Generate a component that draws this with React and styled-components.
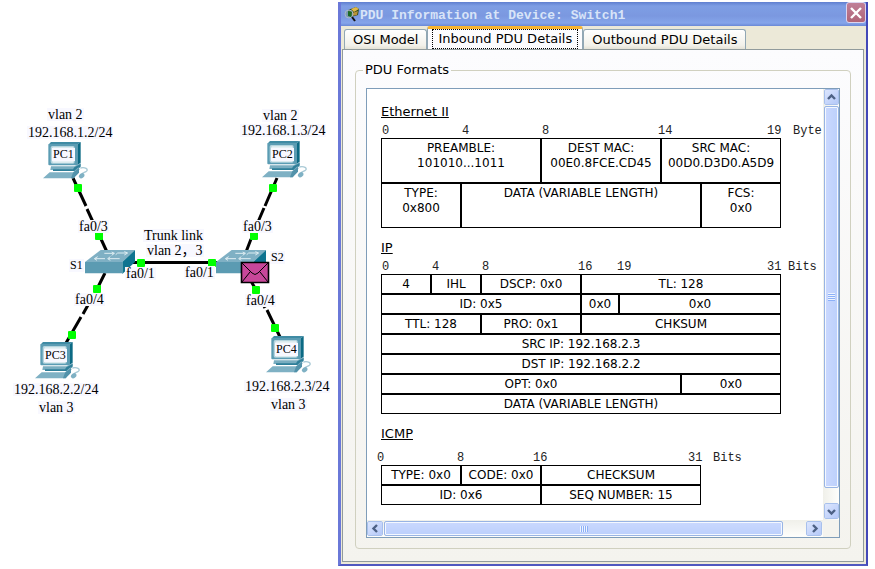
import React from 'react';
import styled, { createGlobalStyle } from 'styled-components';

const sans = '"DejaVu Sans", Verdana, sans-serif';
const mono = '"Liberation Mono", "Courier New", monospace';
const serif = '"Liberation Serif", "Noto Sans CJK SC", serif';

const GlobalStyle = createGlobalStyle`
  * {
    box-sizing: border-box;
  }
  body {
    margin: 0;
    background: #fff;
    color: #000;
    font-family: ${sans};
  }
`;

const Page = styled.div`
  display: flex;
  align-items: flex-start;
  padding: 2px 7px 2px 0;
`;

/* topology */

const Topology = styled.section`
  position: relative;
  flex: 0 0 338px;
  margin-top: -2px;
`;

const Links = styled.svg`
  display: block;
  width: 100%;
`;

const Label = styled.span`
  position: absolute;
  left: ${p => p.$x}px;
  top: ${p => p.$y}px;
  padding: 0 1px;
  background: #f8f8ff;
  font-family: ${serif};
  font-size: ${p => (p.$small ? 12 : 14)}px;
  line-height: 13px;
  white-space: nowrap;
`;

/* dialog */

const Dialog = styled.section`
  flex: 1;
  min-width: 0;
  background: #ece9d8;
  border: solid #6a78d8;
  border-width: 0 2px 2px 3px;
  border-right-color: #4348b8;
  border-bottom-color: #5058c0;
`;

const TitleBar = styled.header`
  display: flex;
  align-items: center;
  height: 24px;
  padding: 0 0 0 3px;
  background: linear-gradient(#5f7fd0, #7e9ee4 4px, #7b98e0 14px, #85a5ea 21px, #6a88d6);
`;

const Title = styled.h1`
  flex: 1;
  margin: 0;
  padding-top: 4px;
  color: #d8e4f8;
  font-family: ${mono};
  font-size: 13px;
  font-weight: bold;
  line-height: 16px;
  white-space: nowrap;
`;

const CloseButton = styled.button`
  display: grid;
  place-items: center;
  align-self: flex-start;
  width: 20px;
  height: 21px;
  padding: 0;
  background: linear-gradient(#c08098, #b06478);
  border: 1px solid #dcd4ee;
  border-radius: 3px;
`;

const Tabs = styled.nav`
  display: flex;
  align-items: flex-end;
  height: 23px;
  padding-left: 3px;
`;

const Tab = styled.button`
  height: 20px;
  padding: 0 8px;
  background: linear-gradient(#fff, #f2f1ea 80%, #e4e2d6);
  border: 1px solid #91a7b4;
  border-bottom: 0;
  border-radius: 3px 3px 0 0;
  font-family: ${sans};
  font-size: 13px;
  line-height: 18px;
  white-space: nowrap;
  color: #000;

  &[aria-selected='true'] {
    height: 23px;
    padding: 0 4px;
    background: #fcfcfe;
    border-top: 3px solid #f8b430;
  }
`;

const Focus = styled.span`
  display: block;
  padding: 0 5px;
  border: 1px dotted #000;
`;

const Pane = styled.div`
  margin: 0 2px 2px 1px;
  padding: 12px;
  background: linear-gradient(#fcfcfe, #f4f3ee);
  border: 1px solid #919b9c;
`;

const Group = styled.fieldset`
  min-width: 0;
  margin: 0;
  padding: 10px;
  border: 1px solid #d0d0bf;
  border-radius: 4px;
`;

const Legend = styled.legend`
  margin-left: -3px;
  padding: 0 2px;
  font-size: 13px;
  line-height: 16px;
`;

const ScrollArea = styled.div`
  display: grid;
  grid-template-columns: minmax(0, 1fr) 16px;
  grid-template-rows: auto 17px;
  background: #f4f3ee;
  border: 1px solid #7f9db9;
`;

const Viewport = styled.div`
  overflow: hidden;
  padding: 15px 0 15px 10px;
  background: #fff;
`;

const Bar = styled.div`
  display: flex;
  flex-direction: ${p => (p.$vertical ? 'column' : 'row')};
  gap: 1px;
  padding: ${p => (p.$vertical ? '0 0 1px 1px' : '1px 1px 1px 0')};
  background: linear-gradient(${p => (p.$vertical ? '90deg' : '180deg')}, #f0f0ea, #fefefc);
`;

const Arrow = styled.button`
  display: grid;
  place-items: center;
  flex: 0 0 16px;
  padding: 0;
  background: linear-gradient(135deg, #dce6fe, #b4c8f8);
  border: 1px solid #fff;
  outline: 1px solid #a8c0ec;
  outline-offset: -1px;
  border-radius: 2px;
`;

const Thumb = styled.div`
  display: grid;
  place-items: center;
  flex: ${p => p.$size};
  background: linear-gradient(${p => (p.$vertical ? '90deg' : '180deg')}, #cad8fe, #bcd0fc);
  border: 1px solid #98b4e4;
  border-radius: 2px;
  box-shadow: inset 0 0 0 1px #f4f8ff;
`;

const Rest = styled.div`
  flex: ${p => p.$size};
`;

const Grip = styled.span`
  width: ${p => (p.$vertical ? 7 : 8)}px;
  height: ${p => (p.$vertical ? 8 : 6)}px;
  background: repeating-linear-gradient(
    ${p => (p.$vertical ? '180deg' : '90deg')},
    #eef4fe 0 1px,
    #8cb0f8 1px 2px
  );
`;

/* header formats */

const Format = styled.section`
  & + & {
    margin-top: 12px;
  }
`;

const Name = styled.h2`
  margin: 0 0 ${p => p.$gap}px 4px;
  font-size: 13px;
  font-weight: normal;
  line-height: 16px;
  text-decoration: underline;
`;

const Ruler = styled.div`
  display: flex;
  padding-left: ${p => p.$start}px;
  font-family: ${mono};
  font-size: 12px;
  line-height: 14px;
  color: #222;
`;

const Mark = styled.span`
  flex: 0 0 ${p => p.$width}px;
`;

const Fields = styled.table`
  table-layout: fixed;
  width: ${p => p.$width}px;
  margin-left: 4px;
  border-collapse: separate;
  border-spacing: 0;
`;

const Column = styled.col`
  width: ${p => p.$width}px;
`;

const Field = styled.td`
  height: ${p => (p.$tall ? 45 : 20)}px;
  padding: ${p => (p.$tall ? 2 : 0)}px 0 0;
  border: 1px solid #000;
  font-size: 12px;
  line-height: 15px;
  text-align: center;
  vertical-align: ${p => (p.$tall ? 'top' : 'middle')};
  white-space: pre-line;
`;

// each field is [text, number of columns it spans]
const formats = [
  {
    name: 'Ethernet II',
    gap: 4,
    start: 5,
    tall: true,
    marks: [['0', 80], ['4', 80], ['8', 116], ['14', 109], ['19', 26], ['Byte', 30]],
    columns: [80, 80, 120, 40, 80],
    rows: [
      [['PREAMBLE:\n101010...1011', 2], ['DEST MAC:\n00E0.8FCE.CD45', 1], ['SRC MAC:\n00D0.D3D0.A5D9', 2]],
      [['TYPE:\n0x800', 1], ['DATA (VARIABLE LENGTH)', 3], ['FCS:\n0x0', 1]],
    ],
  },
  {
    name: 'IP',
    gap: 4,
    start: 5,
    marks: [['0', 50], ['4', 50], ['8', 96], ['16', 39], ['19', 150], ['31', 21], ['Bits', 30]],
    columns: [50, 50, 100, 38, 62, 100],
    rows: [
      [['4', 1], ['IHL', 1], ['DSCP: 0x0', 1], ['TL: 128', 3]],
      [['ID: 0x5', 3], ['0x0', 1], ['0x0', 2]],
      [['TTL: 128', 2], ['PRO: 0x1', 1], ['CHKSUM', 3]],
      [['SRC IP: 192.168.2.3', 6]],
      [['DST IP: 192.168.2.2', 6]],
      [['OPT: 0x0', 5], ['0x0', 1]],
      [['DATA (VARIABLE LENGTH)', 6]],
    ],
  },
  {
    name: 'ICMP',
    gap: 9,
    start: 0,
    marks: [['0', 80], ['8', 76], ['16', 155], ['31', 25], ['Bits', 30]],
    columns: [80, 80, 160],
    rows: [
      [['TYPE: 0x0', 1], ['CODE: 0x0', 1], ['CHECKSUM', 1]],
      [['ID: 0x6', 2], ['SEQ NUMBER: 15', 1]],
    ],
  },
];

const PduFormat = ({ format }) => (
  <Format>
    <Name $gap={format.gap}>{format.name}</Name>
    <Ruler $start={format.start}>
      {format.marks.map(([text, width]) => (
        <Mark key={text} $width={width}>
          {text}
        </Mark>
      ))}
    </Ruler>
    <Fields aria-label={format.name} $width={format.columns.reduce((a, b) => a + b, 0)}>
      <colgroup>
        {format.columns.map((width, i) => (
          <Column key={i} $width={width} />
        ))}
      </colgroup>
      <tbody>
        {format.rows.map((row, i) => (
          <tr key={i}>
            {row.map(([text, span], j) => (
              <Field key={j} colSpan={span} $tall={format.tall}>
                {text}
              </Field>
            ))}
          </tr>
        ))}
      </tbody>
    </Fields>
  </Format>
);

const chevrons = {
  up: 'M1 6 L4.5 2.5 L8 6',
  down: 'M1 3 L4.5 6.5 L8 3',
  left: 'M6 1 L2.5 4.5 L6 8',
  right: 'M3 1 L6.5 4.5 L3 8',
};

const ScrollBar = ({ vertical, thumb, rest }) => {
  const [back, forward] = vertical ? ['up', 'down'] : ['left', 'right'];
  const arrow = to => (
    <Arrow type="button" aria-label={`Scroll ${to}`}>
      <svg width="9" height="9" viewBox="0 0 9 9">
        <path d={chevrons[to]} fill="none" stroke="#4d6185" strokeWidth="2.4" />
      </svg>
    </Arrow>
  );

  return (
    <Bar $vertical={vertical}>
      {arrow(back)}
      <Thumb $vertical={vertical} $size={thumb}>
        <Grip $vertical={vertical} />
      </Thumb>
      <Rest $size={rest} />
      {arrow(forward)}
    </Bar>
  );
};

const pcs = [[43, 142], [262, 141], [35, 342], [266, 336]];
const switches = [[85, 250], [216, 250]];
const ports = [
  [78, 188], [99, 236], [273, 188], [254, 236], [141, 263],
  [212, 263], [97, 289], [72, 335], [256, 290], [275, 328],
];

const labels = [
  ['vlan 2', 47, 108],
  ['192.168.1.2/24', 27, 126],
  ['vlan 2', 262, 109],
  ['192.168.1.3/24', 240, 124],
  ['fa0/3', 78, 220],
  ['fa0/3', 242, 220],
  ['Trunk link', 143, 229],
  ['vlan 2，3', 146, 244],
  ['S1', 69, 259, true],
  ['S2', 270, 251, true],
  ['fa0/1', 125, 267],
  ['fa0/1', 184, 266],
  ['fa0/4', 74, 293],
  ['fa0/4', 245, 294],
  ['192.168.2.2/24', 13, 383],
  ['vlan 3', 38, 401],
  ['192.168.2.3/24', 244, 380],
  ['vlan 3', 270, 398],
  ['PC1', 52, 148, true],
  ['PC2', 271, 148, true],
  ['PC3', 44, 349, true],
  ['PC4', 275, 343, true],
];

const Pc = ({ x, y }) => (
  <svg x={x} y={y} width="45" height="37" viewBox="0 0 135 111">
    <path d="M16 8 L24 0 H113 L103 8 Z" fill="#3f8ba4" />
    <path d="M103 8 L113 0 V62 L103 70 Z" fill="#0c6a84" />
    <rect x="16" y="6" width="88" height="64" rx="3" fill="#5b9cb3" />
    <rect x="23" y="12" width="72" height="53" rx="5" fill="#b4d4de" />
    <rect x="28" y="16" width="64" height="46" rx="3" fill="#e6f1f4" />
    <path d="M24 73 H94 L113 63 V70 L98 84 H22 Z" fill="#79adc0" />
    <path d="M94 76 L113 66 V74 L98 87 H30 V82 H90 Z" fill="#2f7f99" />
    <path d="M20 91 H90 L106 76 L110 82 L92 109 H0 Z" fill="#7fb1c4" />
    <path d="M90 92 L108 78 V92 L92 109 H84 Z" fill="#5292aa" />
    <path d="M112 78 C126 74 138 82 130 88 L118 94" fill="none" stroke="#a9cad6" strokeWidth="4" />
    <ellipse cx="116" cy="101" rx="9" ry="7" fill="#7fb1c4" transform="rotate(-40 116 101)" />
  </svg>
);

const Switch = ({ x, y }) => (
  <svg x={x} y={y} width="50" height="24" viewBox="0 0 150 72">
    <path d="M0 36 L47 0 H150 L112 36 Z" fill="#7fb0c4" />
    <path d="M112 36 L150 0 V36 L112 72 Z" fill="#0f7490" />
    <path d="M0 36 H112 V70 H0 Z" fill="#5b9bb2" />
    <path
      d="M58 10 H88 L80 6 M88 10 L80 16 M30 26 H60 M38 20 L28 26 L36 31 M92 14 L98 9 H126 M118 5 L128 9 L118 15 M70 26 H104 M76 20 L68 26 L76 31"
      fill="none"
      stroke="#deedf2"
      strokeWidth="3"
    />
  </svg>
);

const NetworkTopology = () => (
  <Topology aria-label="Network topology">
    <Links viewBox="0 0 338 420" role="img" aria-label="Two switches joined by a trunk">
      <g stroke="#000" strokeWidth="3">
        <path d="M73 178 L86 206 M87 209 L93 222 M101 239 L107 252" />
        <path d="M277 178 L265 206 M264 208 L258 222 M251 239 L246 252" />
        <path d="M105 273 L97 289 M88 305 L83 314 M81 317 L66 343" />
        <path d="M251 281 L256 290 M264 306 L265 308 M267 310 L280 337" />
        <path d="M133 262.5 H218" />
      </g>
      {pcs.map(([x, y]) => (
        <Pc key={`${x}-${y}`} x={x} y={y} />
      ))}
      {switches.map(([x, y]) => (
        <Switch key={x} x={x} y={y} />
      ))}
      {ports.map(([x, y]) => (
        <rect key={`${x}-${y}`} x={x - 4} y={y - 4} width="8" height="8" rx="1" fill="#0f0" />
      ))}
      <g stroke="#000" fill="none">
        <path d="M241.5 262.5 H268.5 V282.5 H241.5 Z" fill="#c8479a" strokeWidth="1.6" />
        <path d="M242 263 L252 273 Q255 276 258 273 L268 263 M242 282 L250 272 M268 282 L260 272" />
      </g>
    </Links>
    {labels.map(([text, x, y, small]) => (
      <Label key={`${x}-${y}`} $x={x} $y={y} $small={small}>
        {text}
      </Label>
    ))}
  </Topology>
);

const TitleIcon = () => (
  <svg width="16" height="16" viewBox="0 0 16 16" aria-hidden="true">
    <path d="M4 4 L12 1 L15 3 L14 9 L7 11 Z" fill="#2c4a1c" />
    <path d="M7 3 L12 1 L15 3 L10 6 Z" fill="#e0b848" />
    <path d="M8 7 L14 5 L13 9 L8 10 Z" fill="#b89038" />
    <circle cx="5" cy="8" r="4" fill="#7f9a98" fillOpacity="0.6" stroke="#aab8c8" />
    <path d="M4 5 L8 6 L7 11 L4 10 Z" fill="#1c6a24" />
    <path d="M8 11 L11 15" stroke="#111" strokeWidth="2" />
  </svg>
);

const PduDialog = () => (
  <Dialog aria-labelledby="pdu-title">
    <TitleBar>
      <TitleIcon />
      <Title id="pdu-title">PDU Information at Device: Switch1</Title>
      <CloseButton type="button" aria-label="Close">
        <svg width="12" height="12" viewBox="0 0 12 12">
          <path d="M1 1 L11 11 M11 1 L1 11" stroke="#fff" strokeWidth="2.4" />
        </svg>
      </CloseButton>
    </TitleBar>
    <Tabs role="tablist">
      <Tab type="button" role="tab" aria-selected="false">OSI Model</Tab>
      <Tab type="button" role="tab" aria-selected="true">
        <Focus>Inbound PDU Details</Focus>
      </Tab>
      <Tab type="button" role="tab" aria-selected="false">Outbound PDU Details</Tab>
    </Tabs>
    <Pane role="tabpanel">
      <Group>
        <Legend>PDU Formats</Legend>
        <ScrollArea>
          <Viewport>
            {formats.map(format => (
              <PduFormat key={format.name} format={format} />
            ))}
          </Viewport>
          <ScrollBar vertical thumb={385} rest={13} />
          <ScrollBar thumb={400} rest={21} />
        </ScrollArea>
      </Group>
    </Pane>
  </Dialog>
);

const App = () => (
  <>
    <GlobalStyle />
    <Page>
      <NetworkTopology />
      <PduDialog />
    </Page>
  </>
);

export default App;
